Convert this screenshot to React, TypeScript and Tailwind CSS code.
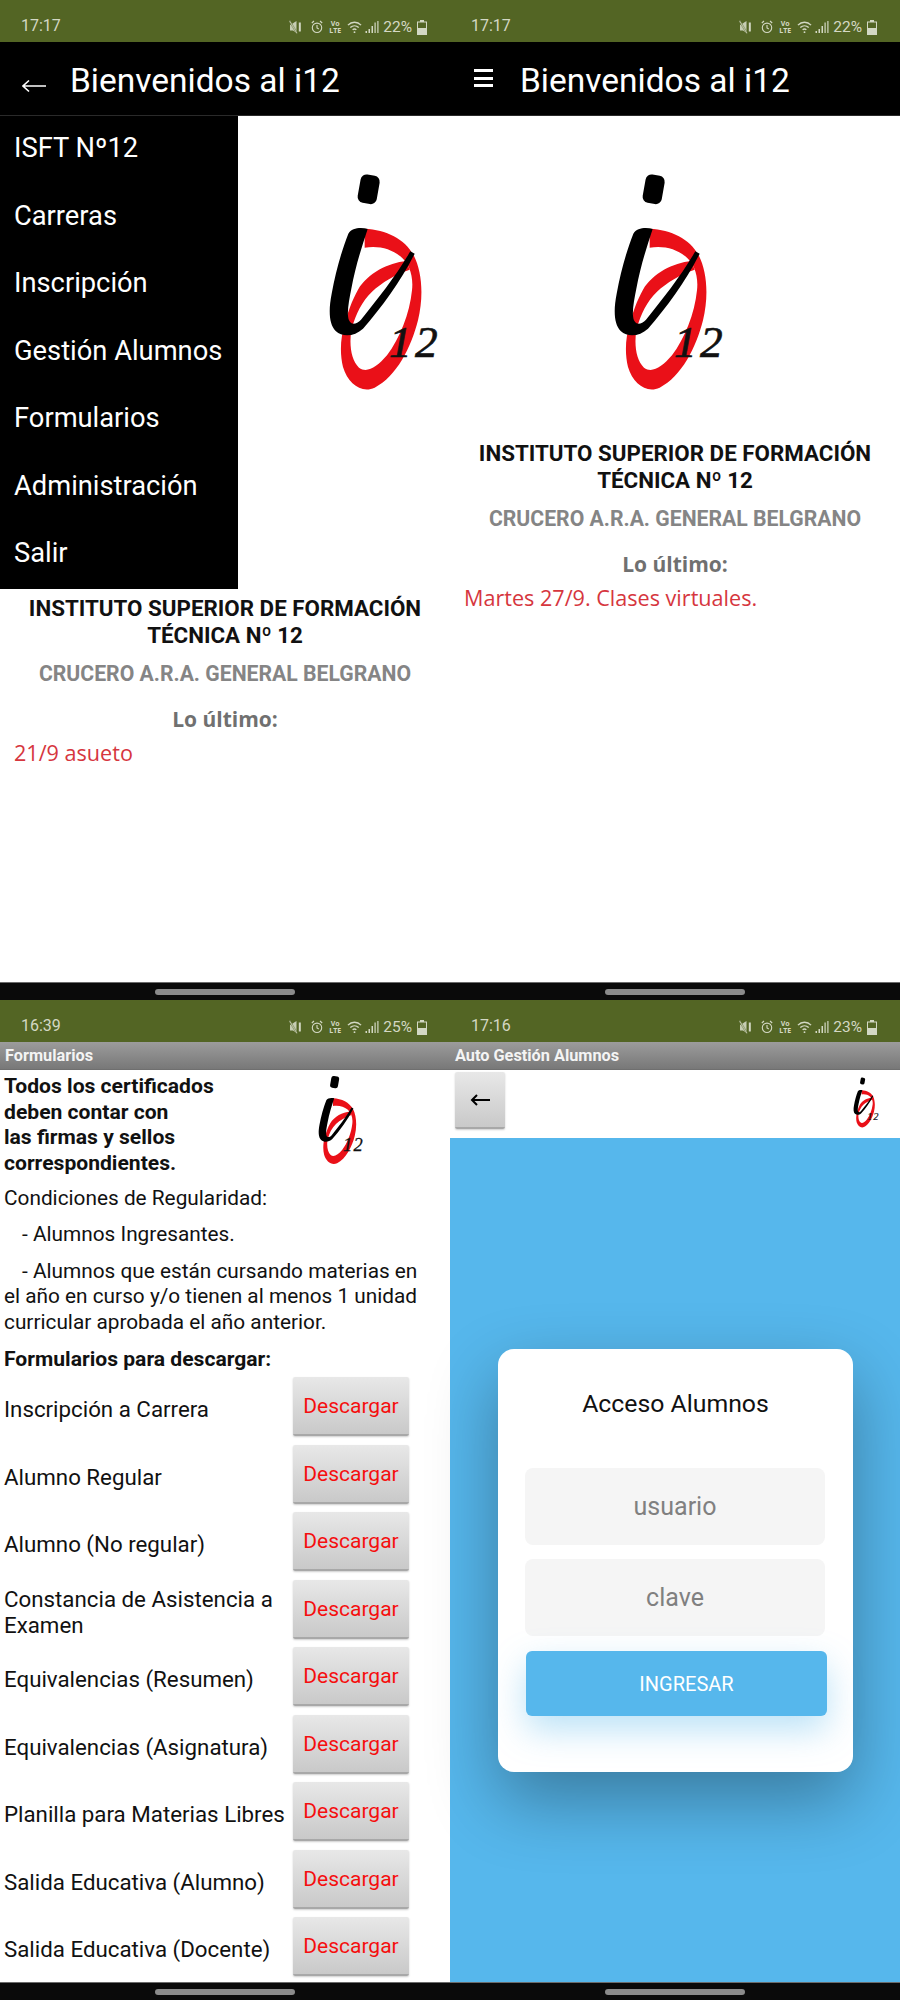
const roboto = "font-['Roboto',sans-serif]";
const openSans = "font-['Open_Sans',sans-serif]";

const formularios = [
    "Inscripción a Carrera",
    "Alumno Regular",
    "Alumno (No regular)",
    "Constancia de Asistencia a Examen",
    "Equivalencias (Resumen)",
    "Equivalencias (Asignatura)",
    "Planilla para Materias Libres",
    "Salida Educativa (Alumno)",
    "Salida Educativa (Docente)",
];

const menu = ["ISFT Nº12", "Carreras", "Inscripción", "Gestión Alumnos", "Formularios", "Administración", "Salir"];

function Logo({ className }: { className: string }) {
    return (
        <svg viewBox="115 65 345 660" className={className}>
            <rect x="208" y="74" width="58" height="86" rx="18" transform="rotate(10 237 117)" fill="#000" />
            <path
                fill="#ea1018"
                d="M225 235C290 238 345 265 372 315C398 365 402 440 385 510C365 590 320 680 255 712C215 730 175 700 160 650C150 610 152 560 166 520L185 540C178 585 185 630 208 652C232 670 262 650 292 615C330 565 360 490 367 420C372 375 358 340 332 318C305 295 265 285 225 292Z"
            />
            <path
                fill="#ea1018"
                d="M350 332C295 338 235 368 205 418C188 448 172 490 165 525L188 530C197 495 217 452 247 424C277 396 315 374 360 358Z"
            />
            <path
                fill="#000"
                d="M176 250C186 232 215 230 234 236C216 290 197 350 185 415C178 450 170 490 178 510C186 526 200 522 214 508C265 445 320 375 362 303L375 310C332 395 277 470 220 535C195 558 160 562 138 542C118 522 116 480 126 430C138 365 156 300 176 250Z"
            />
            <text
                x="298"
                y="620"
                fontFamily="'Liberation Serif', serif"
                fontStyle="italic"
                fontSize="136"
                letterSpacing="10"
                fill="#111"
                stroke="#111"
                strokeWidth="2"
            >
                12
            </text>
        </svg>
    );
}

function StatusIcons({ level }: { level: string }) {
    return (
        <div className="flex items-center text-[#d3d8c4]">
            <svg viewBox="0 0 12 14" className="h-[14px] w-[12px]" fill="currentColor">
                <path d="M2 4.500L7.500 1v12L4 10.500H1V5z" opacity="0.9" />
                <rect x="9.800" y="2.500" width="2" height="9" />
                <path d="M0 1.200L1 0.300 8.500 13l-1 0.800z" stroke="#536524" strokeWidth="0.5" />
            </svg>
            <svg viewBox="0 0 12 14" className="ml-[10px] h-[14px] w-[12px]" fill="none" stroke="currentColor" strokeWidth="1.1">
                <circle cx="6" cy="7.800" r="4.700" />
                <path d="M6 5v3l1.800 1M0.800 3L3 1M11.200 3L9 1" />
            </svg>
            <div className="ml-[7px] flex w-[10px] flex-col items-center text-[7px] leading-[7px] font-bold">
                <span>Vo</span>
                <span>LTE</span>
            </div>
            <svg viewBox="0 0 16 14" className="ml-[7px] h-[14px] w-[15px]" fill="none" stroke="currentColor" strokeWidth="1.5">
                <path d="M1 5c4-4 10-4 14 0M3.500 7.600c2.600-2.400 6.400-2.400 9 0M6 10c1.200-1 2.800-1 4 0" />
                <circle cx="8" cy="12.500" r="1" fill="currentColor" stroke="none" />
            </svg>
            <svg viewBox="0 0 14 14" className="ml-[3px] size-[14px]" fill="currentColor">
                <rect x="0.500" y="11" width="1.500" height="2" />
                <rect x="3.500" y="9" width="1.500" height="4" />
                <rect x="6.500" y="6" width="1.500" height="7" />
                <rect x="9.500" y="2.500" width="1.200" height="10.500" />
                <rect x="12.300" y="1" width="1.200" height="12" />
            </svg>
            <span className={`${roboto} ml-[4px] text-[15.500px] leading-none`}>{level}</span>
            <svg viewBox="0 0 10 15" className="ml-[5px] h-[15px] w-[10px]" fill="currentColor">
                <path d="M3 0h4v1.500h3V15H0V1.500h3zM1 2.500V8h8V2.500z" />
            </svg>
        </div>
    );
}

function StatusBar({ time, level }: { time: string; level: string }) {
    return (
        <div className="flex h-[42px] shrink-0 items-end justify-between bg-[#536524] pr-[23px] pb-[7px] pl-[21px]">
            <span className={`${roboto} text-[16px] leading-[19px] text-[#d3d8c4]`}>{time}</span>
            <StatusIcons level={level} />
        </div>
    );
}

function NavBar() {
    return (
        <div className="flex h-[18px] shrink-0 items-center justify-center border-t border-[#6b6b6b] bg-[#0a0a0a]">
            <div className="h-[6px] w-[140px] rounded-full bg-[#8a8a8a]" />
        </div>
    );
}

function BlackHeader({ icon }: { icon: React.ReactNode }) {
    return (
        <div className="flex h-[74px] shrink-0 items-center border-b border-[#2a2a2a] bg-black pt-[5px] text-white">
            <div className="flex w-[70px] shrink-0 justify-center pr-[3px]">{icon}</div>
            <h1 className={`${roboto} text-[33.500px] leading-none font-normal`}>Bienvenidos al i12</h1>
        </div>
    );
}

function GreyHeader({ title }: { title: string }) {
    return (
        <div className="flex h-[28px] shrink-0 items-center border-b border-[#6f6f6f] bg-gradient-to-b from-[#9c9c9c] to-[#787878] pt-[1px] pl-[5px]">
            <span className={`${roboto} text-[16.300px] leading-none font-bold text-[#f4f4f4]`}>{title}</span>
        </div>
    );
}

function Institute({ news }: { news: string }) {
    return (
        <div className="text-center">
            <p className={`${roboto} text-[22.350px] leading-[27px] font-bold text-[#111]`}>
                INSTITUTO SUPERIOR DE FORMACIÓN
                <br />
                TÉCNICA Nº 12
            </p>
            <p className={`${roboto} mt-[12px] text-[21.200px] leading-[26px] font-bold text-[#858585]`}>
                CRUCERO A.R.A. GENERAL BELGRANO
            </p>
            <p className={`${openSans} mt-[18px] text-[21px] leading-[28px] font-bold text-[#707070]`}>Lo último:</p>
            <p className={`${openSans} mt-[6px] pl-[14px] text-left text-[21.600px] leading-[28px] text-[#d6363e]`}>{news}</p>
        </div>
    );
}

function MenuPanel() {
    return (
        <div className="flex h-[1000px] flex-col">
            <StatusBar time="17:17" level="22%" />
            <BlackHeader
                icon={
                    <svg viewBox="0 0 24 14" className="mt-[9px] h-[14px] w-[24px]" fill="none" stroke="currentColor" strokeWidth="1.600">
                        <path d="M24 7H1M7 1.500L1 7l6 5.500" />
                    </svg>
                }
            />
            <div className="flex-1 bg-white">
                <div className="flex">
                    <nav className="w-[238px] shrink-0 bg-black">
                        {menu.map((item) => (
                            <div
                                key={item}
                                className={`${roboto} flex h-[67.500px] items-center pb-[2px] pl-[14px] text-[27.300px] leading-none text-white`}
                            >
                                {item}
                            </div>
                        ))}
                    </nav>
                    <div className="pt-[56px] pl-[90px]">
                        <Logo className="h-[220px] w-[115px]" />
                    </div>
                </div>
                <div className="pt-[6px]">
                    <Institute news="21/9 asueto" />
                </div>
            </div>
            <NavBar />
        </div>
    );
}

function HomePanel() {
    return (
        <div className="flex h-[1000px] flex-col">
            <StatusBar time="17:17" level="22%" />
            <BlackHeader
                icon={
                    <div className="mb-[6px] flex w-[19px] flex-col gap-[4.500px]">
                        <div className="h-[3px] bg-white" />
                        <div className="h-[3px] bg-white" />
                        <div className="h-[3px] bg-white" />
                    </div>
                }
            />
            <div className="flex-1 bg-white">
                <div className="flex justify-center pt-[56px] pb-[48px]">
                    <Logo className="mr-[9px] h-[220px] w-[115px]" />
                </div>
                <Institute news="Martes 27/9. Clases virtuales." />
            </div>
            <NavBar />
        </div>
    );
}

function FormsPanel() {
    return (
        <div className="flex h-[1000px] flex-col">
            <StatusBar time="16:39" level="25%" />
            <GreyHeader title="Formularios" />
            <div className={`${roboto} flex-1 bg-white pt-[3px] text-[20.800px] leading-[25.500px] text-[#111]`}>
                <div className="flex pl-[4px]">
                    <p className="w-[314px] shrink-0 text-[21.100px] leading-[25.700px] font-bold">
                        Todos los certificados
                        <br />
                        deben contar con
                        <br />
                        las firmas y sellos
                        <br />
                        correspondientes.
                    </p>
                    <Logo className="mt-[2px] h-[90px] w-[47px]" />
                </div>
                <p className="mt-[10px] pl-[4px]">Condiciones de Regularidad:</p>
                <p className="mt-[11px] pl-[22px]">- Alumnos Ingresantes.</p>
                <p className="mt-[11px] pr-[20px] pl-[4px] indent-[18px]">
                    - Alumnos que están cursando materias en el año en curso y/o tienen al menos 1 unidad curricular aprobada el año
                    anterior.
                </p>
                <p className="mt-[11px] pl-[4px] text-[21.100px] font-bold">Formularios para descargar:</p>
                <div className="mt-[1px]">
                    {formularios.map((item) => (
                        <div key={item} className="flex h-[67.500px] items-center pl-[4px]">
                            <div className="w-[289px] shrink-0 pt-[7px] text-[22.300px]">{item}</div>
                            <button className="h-[59px] w-[116px] rounded-[2px] border-b-2 border-[#a8a8a8] bg-gradient-to-b from-[#e8e8e8] to-[#c9c9c9] pt-[3px] text-[21px] text-[#f50f0f] shadow-[0_1px_2px_rgba(0,0,0,0.2)]">
                                Descargar
                            </button>
                        </div>
                    ))}
                </div>
            </div>
            <NavBar />
        </div>
    );
}

function LoginPanel() {
    return (
        <div className="flex h-[1000px] flex-col">
            <StatusBar time="17:16" level="23%" />
            <GreyHeader title="Auto Gestión Alumnos" />
            <div className="flex h-[68px] shrink-0 items-start justify-between bg-white pt-[2px] pr-[20px] pl-[5px]">
                <button className="flex h-[57px] w-[50px] items-center justify-center rounded-[2px] border-b-2 border-[#a8a8a8] bg-gradient-to-b from-[#e8e8e8] to-[#c9c9c9] shadow-[0_1px_2px_rgba(0,0,0,0.2)]">
                    <svg viewBox="0 0 20 12" className="h-[12px] w-[20px]" fill="none" stroke="#000" strokeWidth="2">
                        <path d="M20 6H2M7 1L2 6l5 5" />
                    </svg>
                </button>
                <Logo className="mt-[5px] h-[51px] w-[27px]" />
            </div>
            <div className="flex-1 bg-[#56b7ec] pt-[211px] pl-[48px]">
                <div className="h-[423px] w-[355px] rounded-[16px] bg-white pt-[39px] shadow-[0_28px_70px_rgba(0,0,0,0.33)]">
                    <h2 className={`${roboto} text-center text-[24.800px] leading-[32px] font-normal text-[#111]`}>Acceso Alumnos</h2>
                    <div className={`${roboto} mt-[48px] ml-[27px] flex w-[300px] flex-col gap-[14px] text-[25px] text-[#808080]`}>
                        <div className="flex h-[77px] items-center justify-center rounded-[8px] bg-[#f5f5f5]">usuario</div>
                        <div className="flex h-[77px] items-center justify-center rounded-[8px] bg-[#f5f5f5]">clave</div>
                    </div>
                    <button
                        className={`${roboto} mt-[15px] ml-[28px] h-[65px] w-[301px] rounded-[6px] bg-[#56b7ec] pl-[20px] text-[20px] text-white shadow-[0_14px_34px_rgba(86,183,236,0.4)]`}
                    >
                        INGRESAR
                    </button>
                </div>
            </div>
            <NavBar />
        </div>
    );
}

export default function App() {
    return (
        <div className="grid h-[2000px] w-[900px] grid-cols-2 overflow-hidden bg-white">
            <MenuPanel />
            <HomePanel />
            <FormsPanel />
            <LoginPanel />
        </div>
    );
}
